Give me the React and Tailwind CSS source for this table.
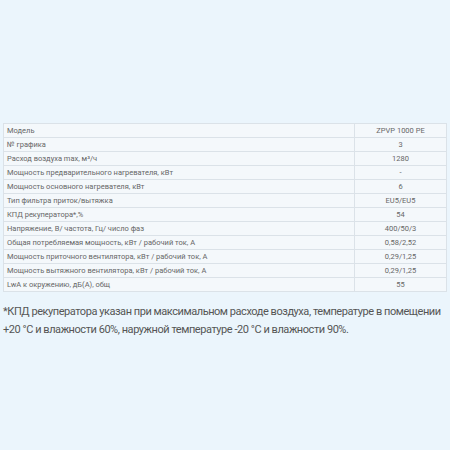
const rows = [
  ["Модель", "ZPVP 1000 PE"],
  ["№ графика", "3"],
  ["Расход воздуха max, м³/ч", "1280"],
  ["Мощность предварительного нагревателя, кВт", "-"],
  ["Мощность основного нагревателя, кВт", "6"],
  ["Тип фильтра приток/вытяжка", "EU5/EU5"],
  ["КПД рекуператора*,%", "54"],
  ["Напряжение, В/ частота, Гц/ число фаз", "400/50/3"],
  ["Общая потребляемая мощность, кВт / рабочий ток, А", "0,58/2,52"],
  ["Мощность приточного вентилятора, кВт / рабочий ток, А", "0,29/1,25"],
  ["Мощность вытяжного вентилятора, кВт / рабочий ток, А", "0,29/1,25"],
  ["LwA к окружению, дБ(А), общ", "55"],
];

export default function App() {
  return (
    <div className="w-[450px] h-[450px] bg-[#ebf5fc] pt-[123px] px-[3px] font-['Roboto',sans-serif]">
      <table className="w-[444px] border-collapse text-[7.5px] text-[#666] font-['Roboto',sans-serif]">
        <tbody>
          {rows.map(([label, value]) => (
            <tr key={label} className="h-[14px]">
              <td className="border border-[#dbe2e8] bg-[#f4f8fb] px-[3px] leading-none">{label}</td>
              <td className="w-[92px] border border-[#dbe2e8] bg-[#f4f8fb] text-center leading-none">{value}</td>
            </tr>
          ))}
        </tbody>
      </table>
      <p className="mt-[11px] w-[447px] text-[11px] leading-[18px] tracking-[-0.45px] text-[#555]">
        *КПД рекуператора указан при максимальном расходе воздуха, температуре в помещении +20 °С и влажности 60%, наружной температуре -20 °С и влажности 90%.
      </p>
    </div>
  );
}
